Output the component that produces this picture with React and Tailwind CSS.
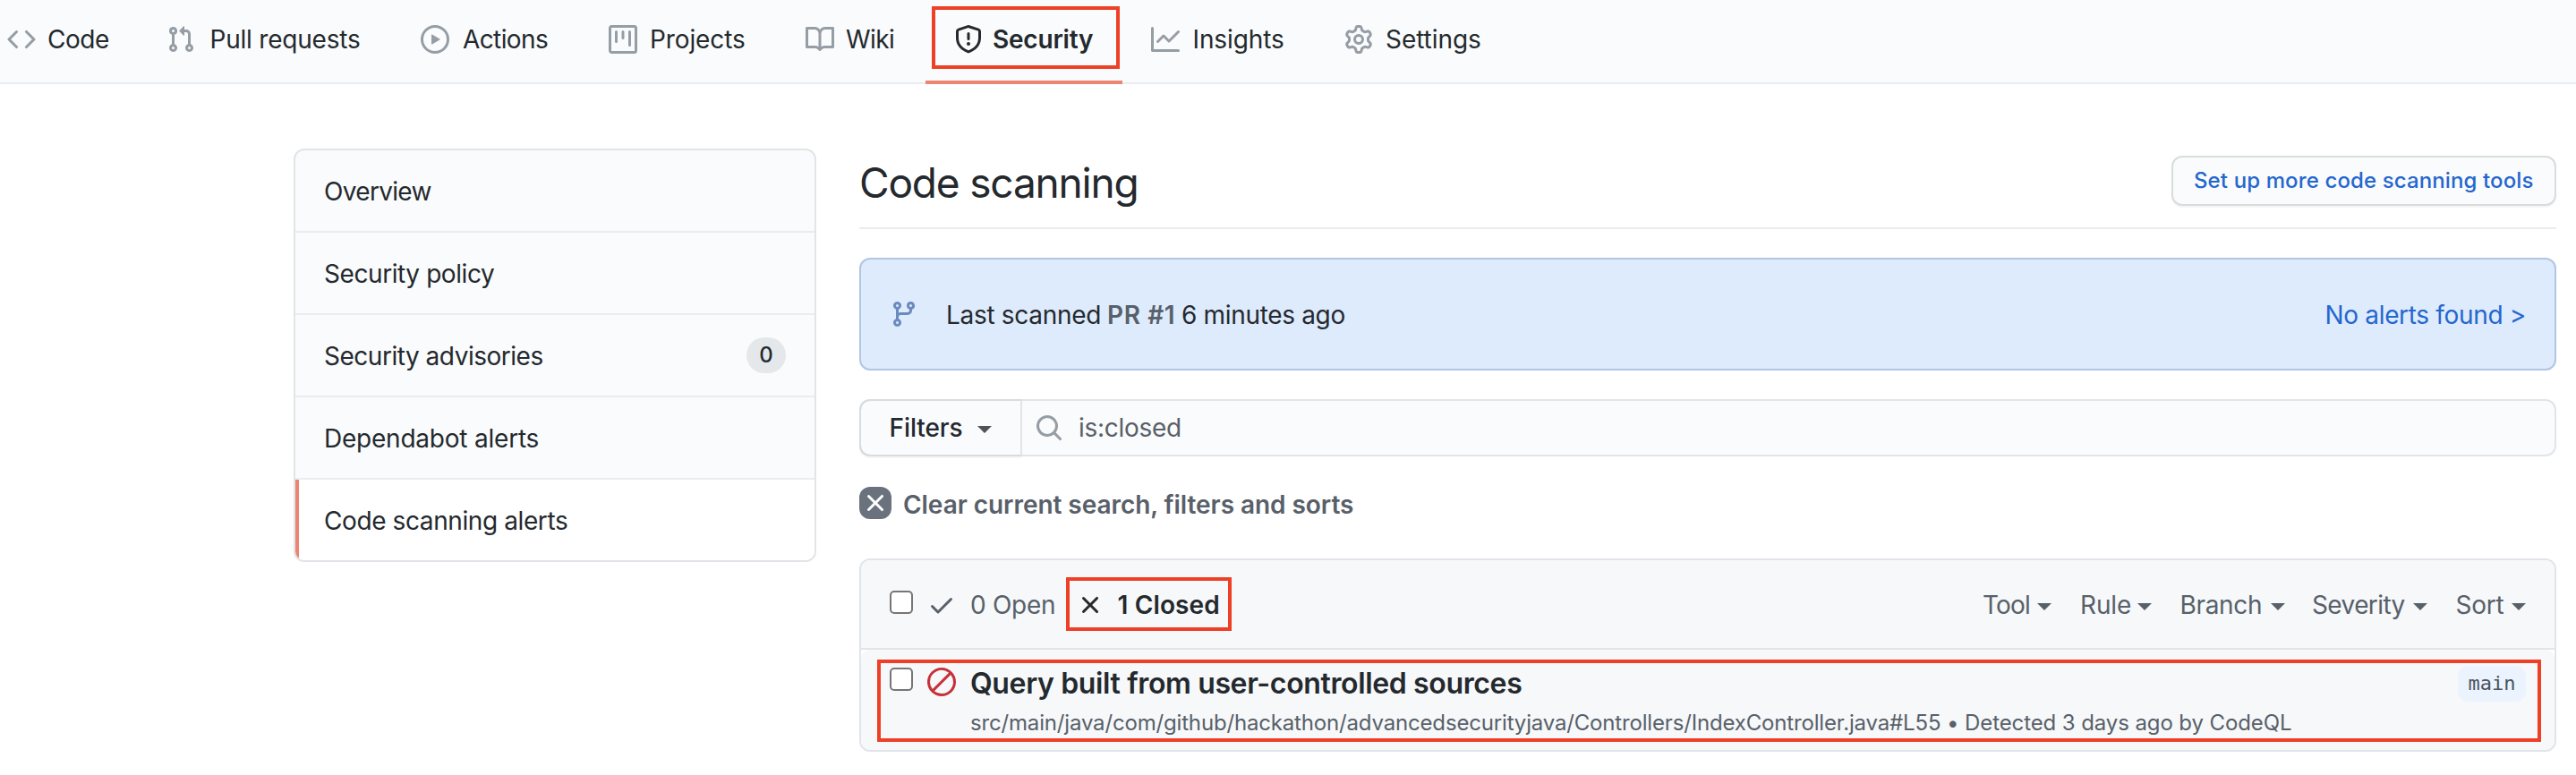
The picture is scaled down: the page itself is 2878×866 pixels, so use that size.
const PATHS = {
  code: 'M4.72 3.22a.75.75 0 011.06 1.06L2.06 8l3.72 3.72a.75.75 0 11-1.06 1.06L.47 8.53a.75.75 0 010-1.06l4.25-4.25zm6.56 0a.75.75 0 10-1.06 1.06L13.94 8l-3.72 3.72a.75.75 0 101.06 1.06l4.25-4.25a.75.75 0 000-1.06l-4.25-4.25z',
  pull: 'M7.177 3.073L9.573.677A.25.25 0 0110 .854v4.792a.25.25 0 01-.427.177L7.177 3.427a.25.25 0 010-.354zM3.75 2.5a.75.75 0 100 1.5.75.75 0 000-1.5zm-2.25.75a2.25 2.25 0 113 2.122v5.256a2.251 2.251 0 11-1.5 0V5.372A2.25 2.25 0 011.5 3.25zM11 2.5h-1V4h1a1 1 0 011 1v5.628a2.251 2.251 0 101.5 0V5A2.5 2.5 0 0011 2.5zm1 10.25a.75.75 0 111.5 0 .75.75 0 01-1.5 0zM3.75 12a.75.75 0 100 1.5.75.75 0 000-1.5z',
  play: 'M1.5 8a6.5 6.5 0 1113 0 6.5 6.5 0 01-13 0zM8 0a8 8 0 100 16A8 8 0 008 0zM6.379 5.227A.25.25 0 006 5.442v5.117a.25.25 0 00.379.214l4.264-2.559a.25.25 0 000-.428L6.379 5.227z',
  project: 'M1.75 0A1.75 1.75 0 000 1.75v12.5C0 15.216.784 16 1.75 16h12.5A1.75 1.75 0 0016 14.25V1.75A1.75 1.75 0 0014.25 0H1.75zM1.5 1.75a.25.25 0 01.25-.25h12.5a.25.25 0 01.25.25v12.5a.25.25 0 01-.25.25H1.75a.25.25 0 01-.25-.25V1.75zM11.75 3a.75.75 0 00-.75.75v7.5a.75.75 0 001.5 0v-7.5a.75.75 0 00-.75-.75zm-8.25.75a.75.75 0 011.5 0v5.5a.75.75 0 01-1.5 0v-5.5zM8 3a.75.75 0 00-.75.75v3.5a.75.75 0 001.5 0v-3.5A.75.75 0 008 3z',
  book: 'M0 1.75A.75.75 0 01.75 1h4.253c1.227 0 2.317.59 3 1.501A3.744 3.744 0 0111.006 1h4.245a.75.75 0 01.75.75v10.5a.75.75 0 01-.75.75h-4.507a2.25 2.25 0 00-1.591.659l-.622.621a.75.75 0 01-1.06 0l-.622-.621A2.25 2.25 0 005.258 13H.75a.75.75 0 01-.75-.75V1.75zm8.755 3a2.25 2.25 0 012.25-2.25H14.5v9h-3.757c-.71 0-1.4.201-1.992.572l.004-7.322zm-1.504 7.324l.004-5.073-.002-2.253A2.25 2.25 0 005.003 2.5H1.5v9h3.757a3.75 3.75 0 011.994.574z',
  shield: 'M7.467.133a1.75 1.75 0 011.066 0l5.25 1.68A1.75 1.75 0 0115 3.48V7c0 1.566-.32 3.182-1.303 4.682-.983 1.498-2.585 2.813-5.032 3.855a1.7 1.7 0 01-1.33 0c-2.447-1.042-4.049-2.357-5.032-3.855C1.32 10.182 1 8.566 1 7V3.48a1.75 1.75 0 011.217-1.667l5.25-1.68zm.61 1.429a.25.25 0 00-.153 0l-5.25 1.68a.25.25 0 00-.174.238V7c0 1.358.275 2.666 1.057 3.86.784 1.194 2.121 2.34 4.366 3.297a.2.2 0 00.154 0c2.245-.956 3.582-2.104 4.366-3.298C13.225 9.666 13.5 8.36 13.5 7V3.48a.25.25 0 00-.174-.237l-5.25-1.68zM9 10.5a1 1 0 11-2 0 1 1 0 012 0zm-.25-5.75a.75.75 0 10-1.5 0v3a.75.75 0 001.5 0v-3z',
  graph: 'M1.5 1.75a.75.75 0 00-1.5 0v12.5c0 .414.336.75.75.75h14.5a.75.75 0 000-1.5H1.5V1.75zm14.28 2.53a.75.75 0 00-1.06-1.06L10 7.94 7.53 5.47a.75.75 0 00-1.06 0L3.22 8.72a.75.75 0 001.06 1.06L7 7.06l2.47 2.47a.75.75 0 001.06 0l5.25-5.25z',
  gear: 'M7.429 1.525a6.593 6.593 0 011.142 0c.036.003.108.036.137.146l.289 1.105c.147.56.55.967.997 1.189.174.086.341.183.501.29.417.278.97.423 1.53.27l1.102-.303c.11-.03.175.016.195.046.219.31.41.641.573.989.014.031.022.11-.059.19l-.815.806c-.411.406-.562.957-.53 1.456a4.588 4.588 0 010 .582c-.032.499.119 1.05.53 1.456l.815.806c.08.08.073.159.059.19a6.494 6.494 0 01-.573.99c-.02.029-.086.074-.195.045l-1.103-.303c-.559-.153-1.112-.008-1.529.27-.16.107-.327.204-.5.29-.449.222-.851.628-.998 1.189l-.289 1.105c-.029.11-.101.143-.137.146a6.613 6.613 0 01-1.142 0c-.036-.003-.108-.037-.137-.146l-.289-1.105c-.147-.56-.55-.967-.997-1.189a4.502 4.502 0 01-.501-.29c-.417-.278-.97-.423-1.53-.27l-1.102.303c-.11.03-.175-.016-.195-.046a6.492 6.492 0 01-.573-.989c-.014-.031-.022-.11.059-.19l.815-.806c.411-.406.562-.957.53-1.456a4.587 4.587 0 010-.582c.032-.499-.119-1.05-.53-1.456l-.815-.806c-.08-.08-.073-.159-.059-.19a6.44 6.44 0 01.573-.99c.02-.029.086-.075.195-.045l1.103.303c.559.153 1.112.008 1.529-.27.16-.107.327-.204.5-.29.449-.222.851-.628.998-1.189l.289-1.105c.029-.11.101-.143.137-.146zM8 0c-.236 0-.47.01-.701.03-.743.065-1.29.615-1.458 1.261l-.29 1.106c-.017.066-.078.158-.211.224a5.994 5.994 0 00-.668.386c-.123.082-.233.09-.3.071L3.27 2.776c-.644-.177-1.392.02-1.82.63a7.977 7.977 0 00-.704 1.217c-.315.675-.111 1.422.363 1.891l.815.806c.05.048.098.147.088.294a6.084 6.084 0 000 .772c.01.147-.038.246-.088.294l-.815.806c-.474.469-.678 1.216-.363 1.891.2.428.436.835.704 1.218.428.609 1.176.806 1.82.63l1.103-.303c.066-.019.176-.011.299.071.213.143.436.272.668.386.133.066.194.158.212.224l.289 1.106c.169.646.715 1.196 1.458 1.26a8.094 8.094 0 001.402 0c.743-.064 1.29-.614 1.458-1.26l.29-1.106c.017-.066.078-.158.211-.224a5.98 5.98 0 00.668-.386c.123-.082.233-.09.3-.071l1.102.302c.644.177 1.392-.02 1.82-.63.268-.382.505-.789.704-1.217.315-.675.111-1.422-.364-1.891l-.814-.806c-.05-.048-.098-.147-.088-.294a6.1 6.1 0 000-.772c-.01-.147.039-.246.088-.294l.814-.806c.475-.469.679-1.216.364-1.891a7.992 7.992 0 00-.704-1.218c-.428-.609-1.176-.806-1.82-.63l-1.103.303c-.066.019-.176.011-.299-.071a5.991 5.991 0 00-.668-.386c-.133-.066-.194-.158-.212-.224L10.16 1.29C9.99.645 9.444.095 8.701.031A8.094 8.094 0 008 0zm1.5 8a1.5 1.5 0 11-3 0 1.5 1.5 0 013 0zM11 8a3 3 0 11-6 0 3 3 0 016 0z',
  branch: 'M11.75 2.5a.75.75 0 100 1.5.75.75 0 000-1.5zm-2.25.75a2.25 2.25 0 113 2.122V6A2.5 2.5 0 0110 8.5H6a1 1 0 00-1 1v1.128a2.251 2.251 0 11-1.5 0V5.372a2.25 2.25 0 111.5 0v1.836A2.492 2.492 0 016 7h4a1 1 0 001-1v-.628A2.25 2.25 0 019.5 3.25zM4.25 12a.75.75 0 100 1.5.75.75 0 000-1.5zM3.5 3.25a.75.75 0 111.5 0 .75.75 0 01-1.5 0z',
  search: 'M11.5 7a4.499 4.499 0 11-8.998 0A4.499 4.499 0 0111.5 7zm-.82 4.74a6 6 0 111.06-1.06l3.04 3.04a.75.75 0 11-1.06 1.06l-3.04-3.04z',
  x: 'M3.72 3.72a.75.75 0 011.06 0L8 6.94l3.22-3.22a.75.75 0 111.06 1.06L9.06 8l3.22 3.22a.75.75 0 11-1.06 1.06L8 9.06l-3.22 3.22a.75.75 0 01-1.06-1.06L6.94 8 3.72 4.78a.75.75 0 010-1.06z',
  check: 'M13.78 4.22a.75.75 0 010 1.06l-7.25 7.25a.75.75 0 01-1.06 0L2.22 9.28a.75.75 0 011.06-1.06L6 10.94l6.72-6.72a.75.75 0 011.06 0z',
  slash: 'M1.5 8a6.5 6.5 0 0110.535-5.096l-9.131 9.131A6.472 6.472 0 011.5 8zm2.465 5.096a6.5 6.5 0 009.131-9.131l-9.131 9.131zM8 0a8 8 0 100 16A8 8 0 008 0z',
};

function Icon({ name, className = '' }) {
  return (
    <svg viewBox="0 0 16 16" className={`size-8 shrink-0 ${className}`} fill="currentColor" fillRule="evenodd" aria-hidden="true">
      <path d={PATHS[name]} />
    </svg>
  );
}

function Caret({ className = '' }) {
  return (
    <svg viewBox="0 0 16 8" className={`h-2 w-4 shrink-0 ${className}`} fill="currentColor" aria-hidden="true">
      <path d="M0 0h16L8 8z" />
    </svg>
  );
}

function Checkbox() {
  return <span role="checkbox" aria-checked="false" className="block size-[26px] shrink-0 rounded-[5px] border-2 border-[#767676] bg-white" />;
}

const TABS = [
  { label: 'Code', icon: 'code', item: 'w-[178px] gap-[13px]', text: 'tracking-[-0.46px]' },
  { label: 'Pull requests', icon: 'pull', item: 'w-[284px] gap-[16.5px]', text: 'tracking-[-0.21px]' },
  { label: 'Actions', icon: 'play', item: 'w-[210px] gap-[15px]', text: 'tracking-[-0.6px]' },
  { label: 'Projects', icon: 'project', item: 'w-[220px] gap-3.5', text: 'tracking-[-0.11px]' },
  { label: 'Wiki', icon: 'book', item: 'w-[166px] gap-[13px]', text: 'tracking-[-0.58px]' },
  { label: 'Security', icon: 'shield', item: 'w-[220px] gap-[11px]', text: 'tracking-[-0.2px]', selected: true },
  { label: 'Insights', icon: 'graph', item: 'w-[216px] gap-[14.5px]', text: 'tracking-[-0.11px]' },
  { label: 'Settings', icon: 'gear', item: 'gap-3.5', text: 'tracking-[-0.06px]' },
];

const SIDE = [
  { label: 'Overview', text: 'tracking-[-0.68px]' },
  { label: 'Security policy', text: 'tracking-[-0.42px]' },
  { label: 'Security advisories', text: 'tracking-[-0.48px]', count: 0 },
  { label: 'Dependabot alerts', text: 'tracking-[-0.22px]' },
  { label: 'Code scanning alerts', text: 'tracking-[-0.4px]', active: true },
];

const MENUS = [
  { label: 'Tool', box: 'w-[109px]', text: 'w-[61px] tracking-[-0.82px]' },
  { label: 'Rule', box: 'w-[111.5px]', text: 'w-16 tracking-[-0.12px]' },
  { label: 'Branch', box: 'w-[147.5px]', text: 'w-[101px] tracking-[-0.32px]' },
  { label: 'Severity', box: 'w-[160.5px]', text: 'w-[113px] tracking-[-0.6px]' },
  { label: 'Sort', box: 'w-[78.5px]', text: 'w-[62.5px] tracking-[-0.21px]' },
];

function TabBar() {
  return (
    <nav className="flex h-[94px] border-b-2 border-[#eaecef] bg-[#fafbfc] pl-2">
      {TABS.map((t) => (
        <a key={t.label} className={`relative flex h-[88px] items-center ${t.item} ${t.selected ? 'font-semibold' : ''}`}>
          <Icon name={t.icon} className={t.selected ? 'text-[#24292e]' : 'text-[#959da5]'} />
          <span className={t.text}>{t.label}</span>
          {t.selected && (
            <>
              <span className="absolute top-[7px] -left-[25px] h-[70px] w-[210px] border-4 border-[#ee4027]" />
              <span className="absolute top-[90px] -left-8 h-1 w-[220px] bg-[#ec8672]" />
            </>
          )}
        </a>
      ))}
    </nav>
  );
}

function Sidebar() {
  return (
    <aside className="w-[584px] shrink-0 self-start overflow-hidden rounded-xl border-2 border-[#e1e4e8] bg-[#fafbfc]">
      {SIDE.map((s) => (
        <a
          key={s.label}
          className={`flex items-center justify-between pr-8 ${s.active ? 'h-[90px] border-l-4 border-[#ec8672] bg-white pl-7' : 'h-[92px] border-b-2 border-[#eaecef] pl-8'}`}
        >
          <span className={`pt-0.5 ${s.text}`}>{s.label}</span>
          {s.count !== undefined && (
            <span className="flex h-10 w-11 items-center justify-center rounded-full bg-[#e4e8ea] text-2xl leading-none font-medium">{s.count}</span>
          )}
        </a>
      ))}
    </aside>
  );
}

function ScanBanner() {
  return (
    <div className="mt-8 flex h-[126px] items-center rounded-xl border-2 border-[#b0c6e4] bg-[#deebfd] pr-8 pl-8">
      <Icon name="branch" className="text-[#6b8bbd]" />
      <p className="ml-[31px] flex pt-px">
        <span className="w-[180px] tracking-[-0.3px]">Last scanned</span>
        <span className="w-[83px] font-semibold tracking-[0.6px] text-[#586069]">PR #1</span>
        <span className="tracking-[-0.33px]">6 minutes ago</span>
      </p>
      <a className="ml-auto pt-px tracking-[-0.33px] text-[#2467ce]">No alerts found &gt;</a>
    </div>
  );
}

function SearchBar() {
  return (
    <div className="mt-8 flex h-16 rounded-xl border-2 border-[#e1e4e8] bg-[#fafbfc]">
      <button className="-my-0.5 -ml-0.5 flex w-[182px] items-center rounded-l-xl border-2 border-[#d9dcde] border-r-[#e1e4e8] pl-[31.5px] font-medium shadow-[0_2px_0_rgba(27,31,35,0.04)]">
        <span className="w-[98.5px] text-left tracking-[-0.09px]">Filters</span>
        <Caret className="mt-1 text-[#4f5358]" />
      </button>
      <div className="flex items-center pl-3.5 text-[#586069]">
        <Icon name="search" className="text-[#959da5]" />
        <span className="ml-[17px] tracking-[-0.29px]">is:closed</span>
      </div>
    </div>
  );
}

function AlertList() {
  return (
    <section className="relative mt-11 h-[216px] rounded-xl border-2 border-[#e1e4e8] bg-white">
      <header className="flex h-[100px] items-center rounded-t-[10px] border-b-2 border-[#e1e4e8] bg-[#f6f8fa] pl-8 text-[#586069]">
        <div className="mb-1">
          <Checkbox />
        </div>
        <Icon name="check" className="mt-0.5 ml-4" />
        <span className="ml-4 w-[107px] pt-0.5 tracking-[-0.28px]">0 Open</span>
        <div className="-mr-1 flex h-[60px] w-[185px] items-center border-4 border-[#ee4027] pl-[7px] font-semibold text-[#24292e]">
          <Icon name="x" className="mt-0.5" />
          <span className="ml-[14.5px] pt-0.5 tracking-[0.14px]">1 Closed</span>
        </div>
        <div className="mr-8 ml-auto flex pt-0.5">
          {MENUS.map((m) => (
            <span key={m.label} className={`flex items-center ${m.box}`}>
              <span className={m.text}>{m.label}</span>
              <Caret className="mt-1" />
            </span>
          ))}
        </div>
      </header>
      <div className="flex h-28 items-start rounded-[10px] bg-[#f6f8fa] pr-8 pl-8">
        <div className="mt-5">
          <Checkbox />
        </div>
        <Icon name="slash" className="mt-5 ml-4 text-[#c53238]" />
        <div className="mt-4 ml-4">
          <h2 className="text-[32px] leading-[44px] font-semibold tracking-[-0.36px]">Query built from user-controlled sources</h2>
          <p className="mt-1 text-2xl leading-[36px] tracking-[-0.1px] text-[#586069]">
            <span className="tracking-[-0.168px]">src/main/java/com/github/hackathon/advancedsecurityjava/Controllers/IndexController.java#L55</span> • Detected 3 days ago by CodeQL
          </p>
        </div>
        <span className="mt-[18px] ml-auto flex h-10 w-[76px] items-center justify-center rounded-xl bg-[#eaf3fe] font-['DejaVu_Sans_Mono',monospace] text-[22px] leading-none text-[#4c545c]">
          main
        </span>
      </div>
      <div className="absolute top-[111px] left-[18px] h-[92px] w-[1859px] border-4 border-[#ee4027]" />
    </section>
  );
}

export default function App() {
  return (
    <div className="h-[866px] overflow-hidden bg-white font-['Inter',sans-serif] text-[28px] leading-[36px] whitespace-nowrap text-[#24292e]">
      <TabBar />
      <div className="flex gap-12 pt-[72px] pr-[22px] pl-[328px]">
        <Sidebar />
        <main className="min-w-0 flex-1">
          <div className="flex h-[90px] items-start justify-between border-b-2 border-[#eaecef]">
            <h1 className="mt-2 text-[46px] leading-[60px] tracking-[-1.17px]">Code scanning</h1>
            <button className="mt-2 flex h-14 w-[430px] items-center rounded-xl border-2 border-[#d9dcdc] bg-[#fafbfc] pl-[23px] text-2xl leading-none font-medium tracking-[0.12px] text-[#2467ce] shadow-[0_2px_0_rgba(27,31,35,0.04)]">
              Set up more code scanning tools
            </button>
          </div>
          <ScanBanner />
          <SearchBar />
          <a className="mt-[34px] flex h-9 items-center font-semibold text-[#586069]">
            <span className="flex size-9 items-center justify-center rounded-xl bg-[#6a737d] text-white">
              <Icon name="x" />
            </span>
            <span className="mt-[3px] ml-[13px] tracking-[-0.05px]">Clear current search, filters and sorts</span>
          </a>
          <AlertList />
        </main>
      </div>
    </div>
  );
}
